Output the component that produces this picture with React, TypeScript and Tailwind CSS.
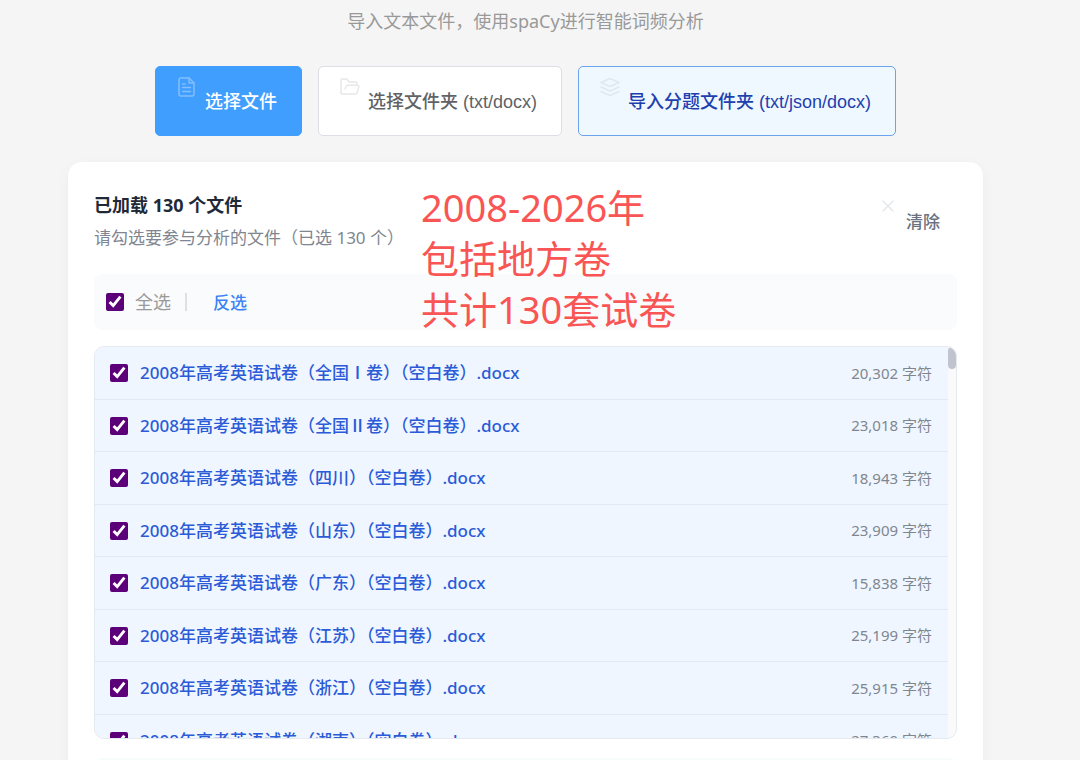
import type { ReactNode } from "react";

const files = [
  { name: "2008年高考英语试卷（全国Ⅰ卷）（空白卷）.docx", size: "20,302" },
  { name: "2008年高考英语试卷（全国Ⅱ卷）（空白卷）.docx", size: "23,018" },
  { name: "2008年高考英语试卷（四川）（空白卷）.docx", size: "18,943" },
  { name: "2008年高考英语试卷（山东）（空白卷）.docx", size: "23,909" },
  { name: "2008年高考英语试卷（广东）（空白卷）.docx", size: "15,838" },
  { name: "2008年高考英语试卷（江苏）（空白卷）.docx", size: "25,199" },
  { name: "2008年高考英语试卷（浙江）（空白卷）.docx", size: "25,915" },
  { name: "2008年高考英语试卷（湖南）（空白卷）.docx", size: "27,360" },
];

const Icon = ({ className, children }: { className: string; children: ReactNode }) => (
  <svg
    viewBox="0 0 20 20"
    fill="none"
    stroke="currentColor"
    strokeWidth="1.5"
    strokeLinecap="round"
    strokeLinejoin="round"
    aria-hidden="true"
    className={`size-5 shrink-0 ${className}`}
  >
    {children}
  </svg>
);

const ImportButton = ({
  className,
  icon,
  children,
}: {
  className: string;
  icon: ReactNode;
  children: ReactNode;
}) => (
  <button
    type="button"
    className={`flex h-[70px] items-center gap-2 whitespace-nowrap rounded-[5px] border pt-0.5 pr-6 pl-[21px] font-['Liberation_Sans','Noto_Sans_CJK_SC',sans-serif] text-lg font-medium ${className}`}
  >
    {icon}
    <span>{children}</span>
  </button>
);

const checkbox = "size-[18px] shrink-0 accent-[#5c007a]";

export default function App() {
  return (
    <main className="h-screen overflow-hidden bg-[#f5f5f5] pr-[97px] pl-[68px] font-['Noto_Sans','Noto_Sans_CJK_SC',sans-serif]">
      <p className="pt-2 text-center text-lg leading-[26px] text-[#999999]">
        导入文本文件，使用spaCy进行智能词频分析
      </p>

      <div className="mt-8 flex justify-center gap-4">
        <ImportButton
          className="border-[#409eff] bg-[#409eff] text-white"
          icon={
            <Icon className="mt-2 self-start text-[#82bfff]">
              <path d="M12 1H4a2 2 0 0 0-2 2v14a2 2 0 0 0 2 2h11a2 2 0 0 0 2-2V6z" />
              <path d="M12 1v5h5M5.500 7h2.500M5.500 10.500h8M5.500 14.500h8" />
            </Icon>
          }
        >
          选择文件
        </ImportButton>
        <ImportButton
          className="border-[#dcdfe6] bg-white text-[#606266]"
          icon={
            <Icon className="mt-2 self-start text-[#e8e8e8]">
              <path d="M1 16V3.500A1.500 1.500 0 0 1 2.500 2h4.500l2 3h6.500A1.500 1.500 0 0 1 17 6.500V8" />
              <path d="M5 12l1-2.500A2 2 0 0 1 7.800 8.200H17.500a1.300 1.300 0 0 1 1.300 1.700l-1.600 5.800a1.800 1.800 0 0 1-1.700 1.300H2.500A1.500 1.500 0 0 1 1 15.500" />
            </Icon>
          }
        >
          选择文件夹 (txt/docx)
        </ImportButton>
        <ImportButton
          className="border-[#6ba3ec] bg-[#f0f8ff] text-[#1e40af]"
          icon={
            <Icon className="mt-2 self-start text-[#e0e8ef]">
              <path d="M10 1.500l9 4-9 4-9-4zM1 10l9 4 9-4M1 14.500l9 4 9-4" />
            </Icon>
          }
        >
          导入分题文件夹 (txt/json/docx)
        </ImportButton>
      </div>

      <section className="relative mt-[26px] h-screen rounded-[14px] bg-white px-[26px] pt-[29px] shadow-[0_4px_14px_rgba(0,0,0,0.04)]">
        <header className="flex items-center justify-between">
          <div>
            <h2 className="text-lg leading-7 font-bold text-[#1f2937]">已加载 130 个文件</h2>
            <p className="mt-[5px] text-[17px] leading-7 text-[#808690]">
              请勾选要参与分析的文件（已选 130 个）
            </p>
          </div>
          <button
            type="button"
            className="mr-[17px] flex h-[60px] items-center gap-2 text-[17px] font-medium text-[#6b7280]"
          >
            <Icon className="mt-1 self-start text-[#e5e7eb]">
              <path d="M5 5l10 10M15 5L5 15" />
            </Icon>
            清除
          </button>
        </header>

        <div className="mt-[22px] flex h-[56px] items-center rounded-lg bg-[#f9fbfc] px-3">
          <label className="flex items-center gap-[11px] text-lg text-[#999999]">
            <input type="checkbox" defaultChecked className={checkbox} />
            全选
          </label>
          <span className="ml-[14px] h-[18px] w-0.5 bg-[#dfe0e2]" />
          <button type="button" className="ml-[26px] pt-0.5 text-[17px] font-medium text-[#3b82f6]">
            反选
          </button>
        </div>

        <div className="mt-4 flex h-[393px] overflow-hidden rounded-[10px] border border-[#e5e9f0] bg-[#fafafa]">
          <ul className="min-w-0 flex-1">
            {files.map((file) => (
              <li
                key={file.name}
                className="flex border-b border-[#e0e9f5] bg-[#eff6ff] pr-4 pl-[15px] odd:h-[53px] even:h-[52px]"
              >
                <label className="flex min-w-0 flex-1 items-center gap-3 text-[17px] font-medium text-[#2b5bd7]">
                  <input type="checkbox" defaultChecked className={checkbox} />
                  <span className="truncate">{file.name}</span>
                </label>
                <span className="self-center text-[15px] text-[#808690]">{file.size} 字符</span>
              </li>
            ))}
          </ul>
          <div className="w-2 shrink-0">
            <div className="h-[22px] rounded-full bg-[#c1c4cf]" />
          </div>
        </div>

        <div className="mt-[19px] h-14 rounded-lg bg-[#f7fcfc]" />

        <p className="absolute top-5 left-[353px] text-[38px] leading-[51px] whitespace-nowrap text-[#f95555]">
          2008-2026年
          <br />
          包括地方卷
          <br />
          共计130套试卷
        </p>
      </section>
    </main>
  );
}
